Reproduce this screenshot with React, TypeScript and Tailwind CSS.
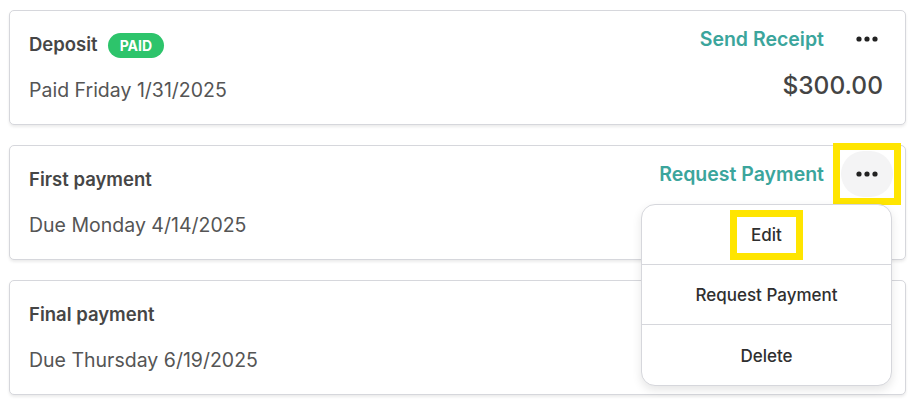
import React from 'react';

const Dots = () => (
  <svg width="22" height="6" viewBox="0 0 22 6" fill="#222">
    <circle cx="3" cy="3" r="2.6" />
    <circle cx="11" cy="3" r="2.6" />
    <circle cx="19" cy="3" r="2.6" />
  </svg>
);

interface RowProps {
  title: string;
  date: string;
  paid?: boolean;
  action?: string;
  amount?: string;
  menuOpen?: boolean;
}

function PaymentCard({ title, date, paid, action, amount, menuOpen }: RowProps) {
  return (
    <div className="relative h-[115px] bg-white border border-[#d6d7dc] rounded-[5px] shadow-[0_2px_3px_rgba(0,0,0,0.08)] flex justify-between pl-[19px] pr-3">
      <div className="pt-[22px]">
        <div className="flex items-center gap-[10px] h-6">
          <span className="text-[18.5px] font-semibold text-[#464646]">{title}</span>
          {paid && (
            <span className="h-[25px] px-[12px] rounded-full bg-[#2dc46b] text-white text-[14px] font-bold flex items-center">PAID</span>
          )}
        </div>
        <div className="mt-[20px] text-[19.5px] leading-[26px] text-[#555]">{date}</div>
      </div>
      <div className="pt-[5px] flex flex-col items-end">
        <div className="flex items-center gap-[17px]">
          {action && <span className="text-[19.5px] font-semibold text-[#3ba59c] pt-[2px]">{action}</span>}
          <div className="relative">
            <button className={`w-[52px] h-[46px] rounded-full flex items-center justify-center ${menuOpen ? 'bg-[#f4f4f5]' : ''}`}>
              <Dots />
            </button>
            {menuOpen && <div className="absolute -inset-[8px] border-[7px] border-[#ffe500]" />}
          </div>
        </div>
        {amount && <div className="mt-[7px] mr-[10px] text-[24.5px] leading-[32px] font-medium text-[#444]">{amount}</div>}
      </div>
      {menuOpen && (
        <div className="absolute z-10 top-[58px] right-[13px] w-[251px] bg-white border border-[#d6d7dc] rounded-[14px] shadow-[0_4px_10px_rgba(0,0,0,0.10)] flex flex-col text-[17px] font-medium text-[#2f2f2f]">
          <div className="h-[60px] flex items-center justify-center border-b border-[#d6d7dc]">
            <span className="border-[7px] border-[#ffe500] px-[14px] py-[6px] leading-[24px]">Edit</span>
          </div>
          <div className="h-[60px] flex items-center justify-center border-b border-[#d6d7dc] pt-[2px]">Request Payment</div>
          <div className="h-[60px] flex items-center justify-center pt-[3px]">Delete</div>
        </div>
      )}
    </div>
  );
}

export default function App() {
  return (
    <div className="w-[922px] h-[403px] bg-white overflow-hidden pl-[9px] pr-[16px] pt-[10px] flex flex-col gap-[20px]" style={{ fontFamily: 'Inter, "Noto Sans", sans-serif' }}>
      <PaymentCard title="Deposit" paid date="Paid Friday 1/31/2025" action="Send Receipt" amount="$300.00" />
      <PaymentCard title="First payment" date="Due Monday 4/14/2025" action="Request Payment" menuOpen />
      <PaymentCard title="Final payment" date="Due Thursday 6/19/2025" />
    </div>
  );
}
